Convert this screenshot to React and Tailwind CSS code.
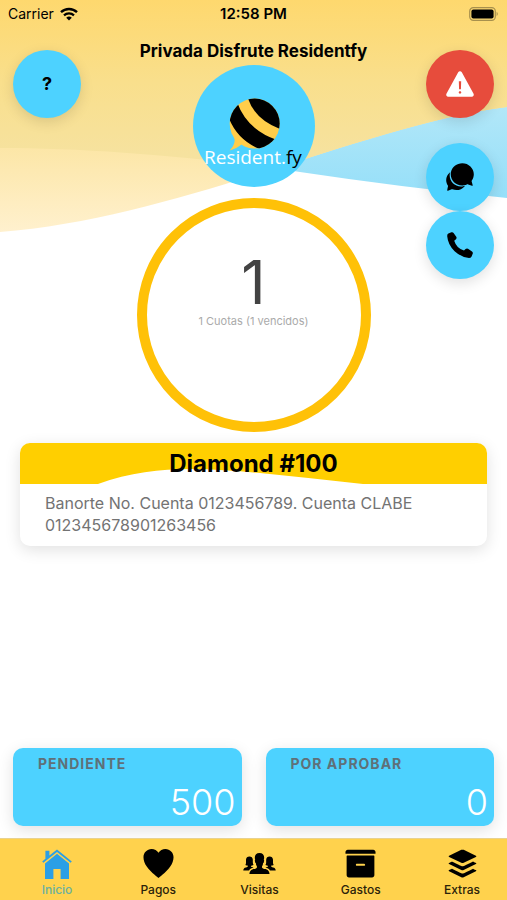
import { useState } from "react";
import clsx from "clsx";
import {
    IoIosArchive,
    IoIosChatbubbles,
    IoIosHeart,
    IoIosPeople,
    IoIosWarning,
    IoLogoBuffer,
} from "react-icons/io";

function HomeIcon({ className }) {
    return (
        <svg viewBox="0 0 30 30" className={className} fill="currentColor" aria-hidden="true">
            <path d="M15 0.4 L29.8 12.4 L28.6 13.8 L15 2.9 L1.4 13.8 L0.2 12.4 L3.4 9.8 V1.8 H7.4 V6.6 Z" />
            <path d="M15 4.8 L27 14.4 V30 H18.6 V20 H11.4 V30 H3 V14.4 Z" />
        </svg>
    );
}

function PhoneIcon({ className }) {
    return (
        <svg viewBox="0 0 26 26" className={className} fill="currentColor" aria-hidden="true">
            <path d="M1.4 1.6 L4.4 0.3 Q5.8 -0.1 6.6 1 L9.4 5 Q9.9 6.2 9 7.2 L7.2 8.8 Q8.4 12.6 10.8 15 Q13.6 17.6 17 18.6 L18.6 17 Q19.8 16.2 21 16.8 L25 19.4 Q26.1 20.2 25.8 21.6 L24.6 24.4 Q23.8 25.9 22 25.9 Q14.4 25.4 7.6 19.2 Q1 12.8 0.2 4.2 Q0.1 2.2 1.4 1.6 Z" />
        </svg>
    );
}

const tabs = [
    { id: "inicio", label: "Inicio", icon: HomeIcon, size: "size-[30px]" },
    { id: "pagos", label: "Pagos", icon: IoIosHeart, size: "size-[37px]" },
    { id: "visitas", label: "Visitas", icon: IoIosPeople, size: "size-[37px]" },
    { id: "gastos", label: "Gastos", icon: IoIosArchive, size: "size-[37px]" },
    { id: "extras", label: "Extras", icon: IoLogoBuffer, size: "size-[37px]" },
];

const balances = [
    { label: "PENDIENTE", amount: 500 },
    { label: "POR APROBAR", amount: 0 },
];

function StatusBar() {
    return (
        <div className="grid grid-cols-3 items-center px-2 pt-1 text-sm leading-5">
            <div className="flex items-center gap-1.5">
                <span>Carrier</span>
                <svg viewBox="0 0 18 14" className="h-3.5 w-[18px]" aria-hidden="true">
                    <path d="M1 5.2 A11.5 11.5 0 0 1 17 5.2" fill="none" stroke="black" strokeWidth="2.4" />
                    <path d="M4 8.4 A7.2 7.2 0 0 1 14 8.4" fill="none" stroke="black" strokeWidth="2.2" />
                    <path d="M6.2 10.8 A4 4 0 0 1 11.8 10.8 L9 13.6 Z" />
                </svg>
            </div>
            <span className="text-center text-[15px] font-semibold">12:58 PM</span>
            <svg viewBox="0 0 30 14" className="h-3.5 w-[30px] justify-self-end" aria-hidden="true">
                <rect x="0.7" y="0.7" width="25.6" height="12.6" rx="3.6" fill="none" stroke="#a8904d" strokeWidth="1.2" />
                <rect x="2.4" y="2.4" width="22.2" height="9.2" rx="2" />
                <path d="M27.6 4.8 Q30 7 27.6 9.2 Z" fill="#a8904d" />
            </svg>
        </div>
    );
}

function Waves() {
    return (
        <svg
            viewBox="0 0 507 240"
            preserveAspectRatio="none"
            className="absolute inset-x-0 top-0 -z-10 h-60 w-full"
            aria-hidden="true"
        >
            <defs>
                <linearGradient id="sun" gradientUnits="userSpaceOnUse" x1="0" y1="0" x2="0" y2="180">
                    <stop offset="0" stopColor="#fed86e" />
                    <stop offset="0.45" stopColor="#f9df8c" />
                    <stop offset="1" stopColor="#f5e3a5" />
                </linearGradient>
                <linearGradient id="sand" gradientUnits="userSpaceOnUse" x1="0" y1="140" x2="0" y2="234">
                    <stop offset="0" stopColor="#fce5a3" />
                    <stop offset="1" stopColor="#fff1cf" />
                </linearGradient>
                <linearGradient id="sky" gradientUnits="userSpaceOnUse" x1="0" y1="105" x2="0" y2="200">
                    <stop offset="0" stopColor="#b2e7f8" />
                    <stop offset="1" stopColor="#95dff9" />
                </linearGradient>
                <clipPath id="above">
                    <path d="M0 0 H507 V198 Q400 187 300 172 C200 157 90 148 0 148 Z" />
                </clipPath>
            </defs>
            <path d="M0 0 H507 V198 Q400 187 300 172 C200 157 90 148 0 148 Z" fill="url(#sky)" />
            <path d="M0 0 H507 V107 C360 126 180 218 0 232 Z" fill="url(#sand)" />
            <path d="M0 0 H507 V107 C360 126 180 218 0 232 Z" fill="url(#sun)" clipPath="url(#above)" />
        </svg>
    );
}

function Logo() {
    return (
        <svg viewBox="0 0 122 122" className="size-[122px]" role="img" aria-label="Resident.fy">
            <defs>
                <clipPath id="bee">
                    <circle cx="61.7" cy="58.6" r="25" />
                </clipPath>
            </defs>
            <circle cx="61" cy="61" r="61" fill="#4dd2ff" />
            <path d="M38 66 Q46 76 36.6 85.4 Q44 83.5 48.5 79.5 L50 70 Z" fill="#ffcd4a" />
            <g clipPath="url(#bee)">
                <rect x="36" y="33" width="52" height="52" fill="#ffcd4a" />
                <path d="M54.4 32 Q62 56 90 65 L90 32 Z" />
                <path d="M44 37 Q54 65 84 75 L69 85 Q44 76 35 51 L35 37 Z" />
            </g>
            <text x="11" y="99" fontSize="19" className="font-['Open_Sans',sans-serif] font-medium" fill="white">
                Resident.<tspan fill="black">fy</tspan>
            </text>
        </svg>
    );
}

function RoundButton({ label, className, children }) {
    return (
        <button
            aria-label={label}
            className={clsx(
                "flex size-[68px] items-center justify-center rounded-full shadow-[0_4px_14px_rgba(0,0,0,0.12)]",
                className
            )}
        >
            {children}
        </button>
    );
}

export default function App() {
    const [activeTab, setActiveTab] = useState("inicio");

    return (
        <div className="relative isolate flex min-h-screen flex-col bg-white font-[Inter,sans-serif] text-black">
            <Waves />
            <StatusBar />

            <header className="grid grid-cols-[1fr_auto_1fr] px-[13px] pt-4">
                <div className="pt-2.5">
                    <RoundButton label="Ayuda" className="bg-[#4dd2ff] text-lg font-bold">?</RoundButton>
                </div>

                <div className="flex flex-col items-center">
                    <h1 className="text-[17px] leading-[22px] font-bold whitespace-nowrap">Privada Disfrute Residentfy</h1>
                    <div className="mt-[3px]">
                        <Logo />
                    </div>
                    <section className="mt-[11px] flex size-[234px] flex-col items-center rounded-full border-10 border-[#ffc107] bg-white pt-[43px]">
                        <p className="text-6xl leading-[62px] text-[#434343]">1</p>
                        <p className="text-[11px] leading-4 text-[#aaaaaa]">1 Cuotas (1 vencidos)</p>
                    </section>
                </div>

                <div className="flex flex-col items-end pt-2.5">
                    <RoundButton label="Alerta" className="mb-[25px] bg-[#e74c3c] text-white">
                        <IoIosWarning className="size-[34px]" />
                    </RoundButton>
                    <RoundButton label="Mensajes" className="bg-[#4dd2ff]">
                        <IoIosChatbubbles className="size-[34px]" />
                    </RoundButton>
                    <RoundButton label="Llamar" className="bg-[#4dd2ff]">
                        <PhoneIcon className="size-[26px]" />
                    </RoundButton>
                </div>
            </header>

            <main className="flex flex-1 flex-col justify-between pt-[11px] pb-3">
                <article className="mx-5 overflow-hidden rounded-[10px] bg-white shadow-[0_4px_16px_rgba(0,0,0,0.12)]">
                    <div className="relative isolate bg-[#ffcf00] text-center">
                        <svg
                            viewBox="0 0 467 41"
                            preserveAspectRatio="none"
                            className="absolute inset-0 -z-10 size-full"
                            aria-hidden="true"
                        >
                            <path d="M78 41 C135 20 190 26 240 30 Q290 35 343 41 Z" fill="white" />
                        </svg>
                        <h2 className="text-2xl leading-[41px] font-bold">Diamond #100</h2>
                    </div>
                    <p className="px-[25px] pt-2 pb-2.5 text-base leading-[22px] text-[#737373]">
                        Banorte No. Cuenta 0123456789. Cuenta CLABE 012345678901263456
                    </p>
                </article>

                <section className="grid grid-cols-2 gap-6 px-[13px]">
                    {balances.map((balance) => (
                        <div
                            key={balance.label}
                            className="rounded-[10px] bg-[#4dd2ff] pt-1.5 pr-1.5 shadow-[0_4px_16px_rgba(0,0,0,0.12)]"
                        >
                            <h3 className="pl-[25px] text-sm leading-5 font-bold tracking-[1px] text-[#5f7078]">{balance.label}</h3>
                            <p className="pt-1 text-right text-4xl leading-[48px] font-light text-white">{balance.amount}</p>
                        </div>
                    ))}
                </section>
            </main>

            <nav className="flex justify-between border-t border-[#e8d290] bg-[#ffd24d] pr-[13px] pl-[25px]">
                {tabs.map(({ id, label, icon: Icon, size }) => (
                    <button
                        key={id}
                        onClick={() => setActiveTab(id)}
                        className="flex w-16 flex-col items-center pt-1.5 pb-0.5"
                    >
                        <span className="flex h-[37px] items-center justify-center">
                            <Icon className={clsx(size, activeTab === id ? "text-[#2b9fe6]" : "text-black")} />
                        </span>
                        <span
                            className={clsx(
                                "text-xs leading-4 font-medium",
                                activeTab === id ? "text-[#6bb09f]" : "text-[#2b220a]"
                            )}
                        >
                            {label}
                        </span>
                    </button>
                ))}
            </nav>
        </div>
    );
}
